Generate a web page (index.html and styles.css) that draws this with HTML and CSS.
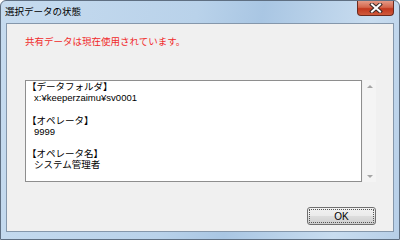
FILE: index.html
```html
<!DOCTYPE html>
<html lang="ja">
<head>
    <meta charset="UTF-8">
    <title>選択データの状態</title>
    <link rel="stylesheet" href="styles.css">
</head>
<body>
    <div class="window">
        <div class="titlebar">
            <span class="title">選択データの状態</span>
            <div class="close">
                <svg width="14" height="10" viewBox="0 0 14 10">
                    <path d="M3 1.5 L11 8.5 M11 1.5 L3 8.5" stroke="#3a2a28" stroke-width="4" stroke-linecap="square"/>
                    <path d="M3 1.5 L11 8.5 M11 1.5 L3 8.5" stroke="#ffffff" stroke-width="2" stroke-linecap="square"/>
                </svg>
            </div>
        </div>
        <div class="client">
            <p class="message">共有データは現在使用されています。</p>
            <div class="list-row">
                <div class="listbox">
                    <div>【データフォルダ】</div>
                    <div class="value">x:¥keeperzaimu¥sv0001</div>
                    <div>&nbsp;</div>
                    <div>【オペレータ】</div>
                    <div class="value">9999</div>
                    <div>&nbsp;</div>
                    <div>【オペレータ名】</div>
                    <div class="value">システム管理者</div>
                </div>
                <div class="scrollbar">
                    <span class="arrow up"></span>
                    <span class="arrow down"></span>
                </div>
            </div>
            <div class="buttons">
                <button class="ok">OK</button>
            </div>
        </div>
    </div>
</body>
</html>
```
FILE: styles.css
```css
body {
    margin: 0;
    background: #ffffff;
    font-family: "Liberation Sans", "Noto Sans CJK JP", sans-serif;
}
.window {
    width: 400px;
    height: 240px;
    box-sizing: border-box;
    border: 1px solid #5f6f82;
    border-radius: 6px 6px 0 0;
    background: linear-gradient(100deg, #c6dbef 0%, #b9d2ea 45%, #a9c6e3 60%, #c8dcef 85%, #b7cfe8 100%);
    display: flex;
    flex-direction: column;
}
.titlebar {
    height: 22px;
    display: flex;
    justify-content: space-between;
    align-items: flex-start;
    padding-left: 4px;
}
.title {
    font-size: 9.5px;
    line-height: 22px;
    color: #000;
}
.close {
    width: 37px;
    height: 15px;
    margin-right: 5px;
    box-sizing: border-box;
    border: 1px solid #6b2a1e;
    border-top: none;
    border-radius: 0 0 4px 4px;
    background: linear-gradient(#e49a86 0%, #d4664c 45%, #c2381e 55%, #cf5a3c 100%);
    display: flex;
    align-items: center;
    justify-content: center;
}
.client {
    flex: 1;
    margin: 0 5px 7px 5px;
    border: 1px solid #8597ab;
    background: #f0f0f0;
    padding: 0 17px 0 18px;
    display: flex;
    flex-direction: column;
}
.message {
    margin: 12px 0 0 0;
    font-size: 9.5px;
    line-height: 12px;
    color: #f02a2a;
}
.list-row {
    display: flex;
    margin-top: 32px;
    height: 102px;
}
.listbox {
    width: 337px;
    box-sizing: border-box;
    border: 1px solid #8e8e8e;
    background: #fff;
    padding: 0 1px;
    font-size: 9.5px;
    line-height: 11.2px;
    color: #000;
}
.value {
    padding-left: 7px;
}
.scrollbar {
    width: 13px;
    margin-left: 1px;
    background: #f4f4f4;
    display: flex;
    flex-direction: column;
    justify-content: space-between;
    align-items: center;
    padding: 5px 0 4px;
    box-sizing: border-box;
}
.arrow {
    width: 0;
    height: 0;
    border-left: 3px solid transparent;
    border-right: 3px solid transparent;
}
.arrow.up {
    border-bottom: 3px solid #a5a5a5;
}
.arrow.down {
    border-top: 3px solid #a5a5a5;
}
.buttons {
    display: flex;
    justify-content: flex-end;
    margin-top: 25px;
}
.ok {
    width: 69px;
    height: 18px;
    padding: 0;
    border: 1px solid #707070;
    border-radius: 3px;
    background: linear-gradient(#f2f2f2 0%, #ebebeb 48%, #dddddd 52%, #cfcfcf 100%);
    font-family: "Liberation Sans", sans-serif;
    font-size: 10px;
    color: #000;
    outline: 1px dotted #555;
    outline-offset: -3px;
}
```
